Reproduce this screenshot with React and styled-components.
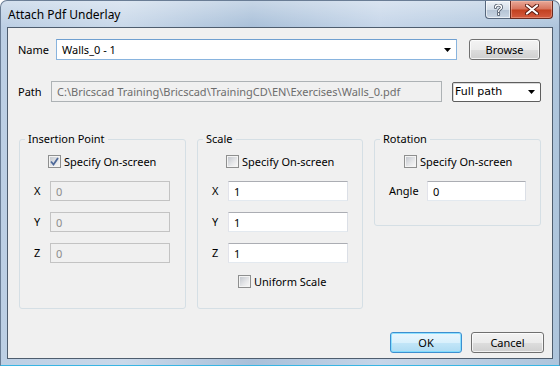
import React from 'react';
import styled, { createGlobalStyle } from 'styled-components';

const GlobalStyle = createGlobalStyle`
  html, body { margin: 0; padding: 0; background: #ffffff; }
  body { font-family: "Noto Sans", "Open Sans", sans-serif; font-size: 11px; color: #000; }
`;

const Window = styled.div`
  width: 560px;
  height: 366px;
  box-sizing: border-box;
  border: 1px solid #6a7d95;
  border-bottom-color: #39b5e3;
  border-radius: 7px 7px 0 0;
  background:
    linear-gradient(180deg, rgba(255,255,255,0.35), rgba(255,255,255,0) 26px),
    linear-gradient(90deg, #bccfe4 0%, #cad9ea 22%, #a9c0d9 45%, #c6d6e9 68%, #aec5dc 100%);
  display: flex;
  flex-direction: column;
`;

const TitleBar = styled.div`
  height: 26px;
  display: flex;
  justify-content: space-between;
  align-items: flex-start;
`;

const Title = styled.div`
  padding: 6px 0 0 7px;
  font-family: "Noto Sans", sans-serif;
  font-size: 12px;
  line-height: 16px;
  color: #000;
`;

const Caption = styled.div`
  display: flex;
  margin-right: 6px;
  height: 18px;
`;

const HelpBtn = styled.div`
  width: 25px;
  box-sizing: border-box;
  border: 1px solid #56677d;
  border-top: none;
  border-right: none;
  border-radius: 0 0 0 4px;
  background: linear-gradient(#eef2f7 0%, #d3dde8 50%, #b4c3d4 51%, #c9d6e4 100%);
  box-shadow: inset 0 0 0 1px rgba(255,255,255,0.6);
  display: flex;
  align-items: center;
  justify-content: center;
`;

const CloseBtn = styled.div`
  width: 43px;
  box-sizing: border-box;
  border: 1px solid #6b2b20;
  border-top: none;
  border-radius: 0 0 4px 0;
  background: linear-gradient(#e8a898 0%, #d7735c 48%, #c2401f 52%, #d45b3f 100%);
  box-shadow: inset 0 0 0 1px rgba(255,200,180,0.4);
  display: flex;
  align-items: center;
  justify-content: center;
`;

const Client = styled.div`
  flex: 1;
  margin: 0 6px 6px 6px;
  border: 1px solid #4e5d6e;
  background: #f0f0f0;
  display: flex;
  flex-direction: column;
  padding: 11px 8px 5px 10px;
  box-sizing: border-box;
`;

const Row = styled.div`
  display: flex;
  align-items: center;
  margin-top: ${p => p.$top || 0}px;
`;

const Label = styled.span`
  width: ${p => p.$w}px;
  flex: none;
  line-height: 16px;
  color: #000;
`;

const Combo = styled.div`
  width: ${p => p.$w}px;
  height: 21px;
  box-sizing: border-box;
  border: 1px solid #89b4de;
  border-top-color: #6f9fd0;
  background: #fff;
  display: flex;
  align-items: center;
  justify-content: space-between;
  padding: 0 5px 0 5px;
  margin-right: 12px;
`;

const Arrow = () => (
  <svg width="7" height="4" viewBox="0 0 7 4">
    <path d="M0 0h7L3.5 4z" fill="#000" />
  </svg>
);

const PathBox = styled.div`
  width: 391px;
  height: 21px;
  box-sizing: border-box;
  border: 1px solid #adb2b5;
  background: #f0f0f0;
  color: #6d6d6d;
  display: flex;
  align-items: center;
  padding-left: 5px;
  white-space: nowrap;
  overflow: hidden;
  margin-right: 10px;
`;

const ClassicCombo = styled.div`
  width: 89px;
  height: 20px;
  box-sizing: border-box;
  border: 1px solid #5e5e5e;
  border-radius: 2px;
  box-shadow: inset 1px 1px 0 #d8d8d8;
  background: #fff;
  display: flex;
  align-items: center;
  justify-content: space-between;
  padding: 0 5px 0 2px;
  font-family: "DejaVu Sans", sans-serif;
  font-size: 11px;
`;

const Button = styled.button`
  width: ${p => p.$w}px;
  flex: none;
  height: 21px;
  margin: 0;
  box-sizing: border-box;
  padding: 0;
  font: inherit;
  color: #000;
  border: 1px solid ${p => (p.$primary ? '#3c8fd0' : '#707070')};
  border-radius: 3px;
  background: ${p =>
    p.$primary
      ? 'linear-gradient(#eaf6fd 0%, #d9f0fc 50%, #c3e6f8 51%, #aedbf3 100%)'
      : 'linear-gradient(#f3f3f3 0%, #ebebeb 50%, #dddddd 51%, #cfcfcf 100%)'};
  box-shadow: inset 0 0 0 1px ${p => (p.$primary ? 'rgba(120,220,255,0.8)' : 'rgba(255,255,255,0.7)')};
`;

const Groups = styled.div`
  display: grid;
  grid-template-columns: 167px 166px 167px;
  column-gap: 11px;
  align-items: start;
  margin: 29px 0 0 1px;
`;

const Group = styled.fieldset`
  margin: 0;
  padding: 0;
  min-width: 0;
  box-sizing: border-box;
  height: ${p => p.$h}px;
  border: 1px solid #d5dfe5;
  border-radius: 3px;
`;

const Legend = styled.legend`
  margin-left: 5px;
  padding: 0 3px;
  line-height: 16px;
  color: #000;
`;

const GroupBody = styled.div`
  display: flex;
  flex-direction: column;
  padding-top: 8px;
`;

const CheckRow = styled.label`
  display: flex;
  align-items: center;
  gap: 3px;
  height: 13px;
  padding-left: ${p => p.$left}px;
  margin-top: ${p => p.$top || 0}px;
  line-height: 16px;
`;

const Box = styled.span`
  width: 13px;
  height: 13px;
  flex: none;
  box-sizing: border-box;
  border: 1px solid #8e8f8f;
  padding: 1px;
  background: #f4f4f4;
  display: flex;
`;

const BoxInner = styled.span`
  flex: 1;
  background: linear-gradient(135deg, #c4c8ce 0%, #e6e7e9 60%, #f6f6f6 100%);
  display: flex;
  align-items: center;
  justify-content: center;
`;

const FieldRow = styled.div`
  display: flex;
  align-items: center;
  padding-left: ${p => p.$left || 14}px;
  margin-top: ${p => p.$top}px;
`;

const Input = styled.div`
  width: ${p => p.$w}px;
  height: 20px;
  box-sizing: border-box;
  border: 1px solid;
  border-color: ${p => (p.$disabled ? '#c3c3c3' : '#abadb3 #dbdfe6 #e3e9ef #e2e3ea')};
  background: ${p => (p.$disabled ? '#f0f0f0' : '#fff')};
  color: ${p => (p.$disabled ? '#8c8c8c' : '#000')};
  display: flex;
  align-items: center;
  padding-left: 5px;
`;

const Footer = styled.div`
  display: flex;
  justify-content: flex-end;
  gap: 9px;
  margin-top: auto;
`;

const CheckBox = ({ checked }) => (
  <Box>
    <BoxInner>
      {checked && (
        <svg width="9" height="9" viewBox="0 0 9 9">
          <path d="M1 4.5L3.5 7.5L8 1" fill="none" stroke="#4f6a9a" strokeWidth="1.8" />
        </svg>
      )}
    </BoxInner>
  </Box>
);

const Field = ({ label, value, disabled, labelW = 16, w = 120, top, left }) => (
  <FieldRow $top={top} $left={left}>
    <Label $w={labelW}>{label}</Label>
    <Input $w={w} $disabled={disabled}>{value}</Input>
  </FieldRow>
);

const PDF_PATH = 'C:\\Bricscad Training\\Bricscad\\TrainingCD\\EN\\Exercises\\Walls_0.pdf';

export default function App() {
  return (
    <>
      <GlobalStyle />
      <Window>
        <TitleBar>
          <Title>Attach Pdf Underlay</Title>
          <Caption>
            <HelpBtn>
              <svg width="9" height="12" viewBox="0 0 9 12">
                <path
                  d="M1.5 3.5C1.5 1.8 2.8 1 4.5 1S7.5 1.9 7.5 3.4C7.5 5.3 4.6 5.3 4.6 7.5M4.6 9.6v1"
                  fill="none" stroke="#4a5565" strokeWidth="3" strokeLinecap="round"
                />
                <path
                  d="M1.5 3.5C1.5 1.8 2.8 1 4.5 1S7.5 1.9 7.5 3.4C7.5 5.3 4.6 5.3 4.6 7.5M4.6 9.6v1"
                  fill="none" stroke="#fff" strokeWidth="1.4" strokeLinecap="round"
                />
              </svg>
            </HelpBtn>
            <CloseBtn>
              <svg width="14" height="11" viewBox="0 0 14 11">
                <path d="M2 1.5L12 9.5M12 1.5L2 9.5" stroke="#5a1a10" strokeWidth="4" strokeLinecap="round" />
                <path d="M2 1.5L12 9.5M12 1.5L2 9.5" stroke="#fff" strokeWidth="2.2" strokeLinecap="round" />
              </svg>
            </CloseBtn>
          </Caption>
        </TitleBar>
        <Client>
          <Row>
            <Label $w={38}>Name</Label>
            <Combo $w={401}>
              <span>Walls_0 - 1</span>
              <Arrow />
            </Combo>
            <Button $w={71}>Browse</Button>
          </Row>
          <Row $top={21}>
            <Label $w={33}>Path</Label>
            <PathBox>{PDF_PATH}</PathBox>
            <ClassicCombo>
              <span>Full path</span>
              <Arrow />
            </ClassicCombo>
          </Row>
          <Groups>
            <Group $h={178}>
              <Legend>Insertion Point</Legend>
              <GroupBody>
                <CheckRow $left={28}>
                  <CheckBox checked />
                  Specify On-screen
                </CheckRow>
                <Field label="X" value="0" disabled top={13} />
                <Field label="Y" value="0" disabled top={11} />
                <Field label="Z" value="0" disabled top={11} />
              </GroupBody>
            </Group>
            <Group $h={178}>
              <Legend>Scale</Legend>
              <GroupBody>
                <CheckRow $left={28}>
                  <CheckBox />
                  Specify On-screen
                </CheckRow>
                <Field label="X" value="1" top={13} />
                <Field label="Y" value="1" top={11} />
                <Field label="Z" value="1" top={11} />
                <CheckRow $left={40} $top={12}>
                  <CheckBox />
                  Uniform Scale
                </CheckRow>
              </GroupBody>
            </Group>
            <Group $h={95}>
              <Legend>Rotation</Legend>
              <GroupBody>
                <CheckRow $left={29}>
                  <CheckBox />
                  Specify On-screen
                </CheckRow>
                <Field label="Angle" value="0" top={13} labelW={38} w={99} />
              </GroupBody>
            </Group>
          </Groups>
          <Footer>
            <Button $w={72} $primary>OK</Button>
            <Button $w={73}>Cancel</Button>
          </Footer>
        </Client>
      </Window>
    </>
  );
}
